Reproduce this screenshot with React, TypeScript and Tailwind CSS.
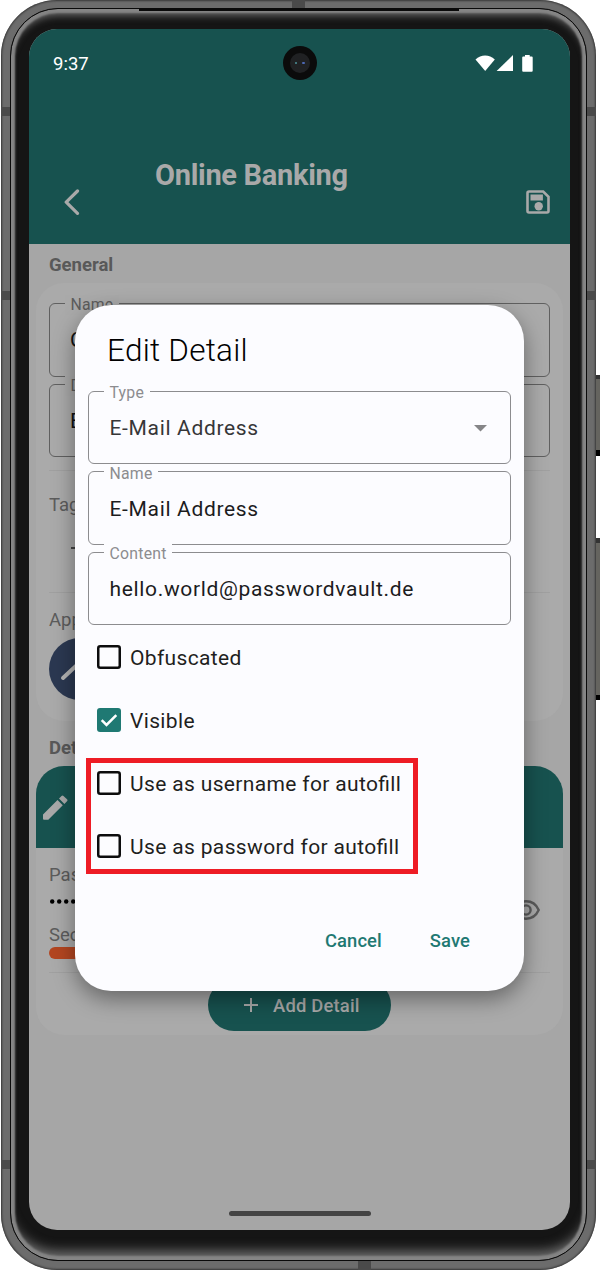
import React from "react";

type FieldProps = {
  label: string;
  value: string;
  dimmed?: boolean;
  select?: boolean;
  soft?: boolean;
};

function Field({ label, value, dimmed, select, soft }: FieldProps) {
  return (
    <div
      className={
        dimmed
          ? "relative flex h-[73.500px] items-center rounded-[6px] border-[1.4px] border-[#606060] pl-[20px]"
          : "relative flex h-[73.500px] items-center rounded-[6px] border-[1.4px] border-[#8c8c8f] pl-[20.500px]"
      }
    >
      <span
        className={
          dimmed
            ? "absolute -top-[9px] left-[15px] bg-[#a9a9a9] px-[5.500px] text-[15.800px] leading-[20px] tracking-[0.2px] text-[#5c5c5c]"
            : "absolute -top-[8.500px] left-[15px] bg-[#fcfcff] px-[5.500px] text-[15.800px] leading-[20px] tracking-[0.25px] text-[#8c8c8f]"
        }
      >
        {label}
      </span>
      <span
        className={
          dimmed
            ? "mt-[2px] text-[21px] text-[#111113]"
            : soft
              ? "mt-[3px] text-[21px] tracking-[0.66px] text-[#363638]"
              : "mt-[3px] text-[21px] tracking-[0.66px] text-[#1c1c1e]"
        }
      >
        {value}
      </span>
      {select && (
        <svg className="mt-[2px] mr-[23.500px] ml-auto h-[7px] w-[13px]" viewBox="0 0 13 7">
          <path d="M0 0h13L6.5 6.5z" fill="#858588" />
        </svg>
      )}
    </div>
  );
}

function Check({ label, checked }: { label: string; checked?: boolean }) {
  return (
    <label className="flex h-[63px] items-center gap-[9px] pl-[9px]">
      {checked ? (
        <span className="flex size-[24px] items-center justify-center rounded-[3px] bg-[#1f7973]">
          <svg className="size-[24px]" viewBox="0 0 24 24" fill="none" stroke="#fff" strokeWidth="2.5">
            <path d="M4.7 12.2l4.8 4.8L19.3 7.2" />
          </svg>
        </span>
      ) : (
        <span className="flex size-[24px]">
          <svg className="size-[24px]" viewBox="0 0 24 24" fill="none" stroke="#0c0c0d" strokeWidth="2.500">
            <rect x="1.250" y="1.250" width="21.500" height="21.500" rx="2" />
          </svg>
        </span>
      )}
      <span className="mt-[3px] text-[21px] tracking-[0.35px] text-[#1f1f21] [font-feature-settings:'liga'_1]">{label}</span>
    </label>
  );
}

function StatusBar() {
  return (
    <div className="flex h-[70px] items-center justify-between pr-[36px] pl-[24px]">
      <span className="mt-[2px] text-[18.5px] text-white">9:37</span>
      <svg className="h-[18px] w-[59px]" viewBox="0 0 59 18" fill="#fff">
        <path d="M.5 4.4C6-.8 14.300-.8 19.800 4.400L10.200 16z" />
        <path d="M38 0v16H21.600z" />
        <path d="M47.200 2.500q0-1 1-1h1.800V0h4.700v1.500h2q1 0 1 1v13.200q0 1-1 1h-8.500q-1 0-1-1z" />
      </svg>
    </div>
  );
}

function Header() {
  return (
    <header className="h-[215px] shrink-0 bg-[#17524f]">
      <StatusBar />
      <div className="flex h-[145px] pt-[58px] text-[#a9a9a9]">
        <svg className="mt-[31px] ml-[34px] h-[27px] w-[17px]" viewBox="0 0 17 27" fill="none" stroke="currentColor" strokeWidth="3.200" strokeLinecap="round" strokeLinejoin="round">
          <path d="M14.500 3L3.200 14.200 14.500 25.300" />
        </svg>
        <h1 className="ml-[75px] text-[29px] leading-[36px] font-bold tracking-[-0.3px]">Online Banking</h1>
        <svg className="mt-[32px] mr-[19px] ml-auto size-[26px]" viewBox="0 0 26 26">
          <path d="M4 2.500h14.200L23.500 7.800V22q0 1.500-1.500 1.500H4q-1.500 0-1.500-1.500V4q0-1.500 1.500-1.500z" fill="none" stroke="currentColor" strokeWidth="2.600" />
          <path d="M5.500 5.500h12.400v6H5.500z" fill="currentColor" />
          <circle cx="13.700" cy="17.200" r="4.200" fill="currentColor" />
        </svg>
      </div>
    </header>
  );
}

function VaultPage() {
  return (
    <main className="flex flex-1 flex-col px-[7px]">
      <h2 className="h-[39px] pl-[13px] text-[18.500px] leading-[42px] font-bold text-[#595959]">General</h2>
      <section className="h-[438px] rounded-[28px] bg-[#aaaaaa] px-[13px] pt-[20px]">
        <div className="flex flex-col gap-[7px]">
          <Field label="Name" value="O" dimmed />
          <Field label="D" value="B" dimmed />
        </div>
        <div className="mt-[12.500px] h-[1px] bg-[#a0a0a0]" />
        <p className="mt-[21px] text-[18.500px] leading-[26px] text-[#5c5c5c]">Tag</p>
        <div className="mt-[19px] mb-[1px] ml-[22px] flex h-[22px] items-center">
          <svg className="size-[16px]" viewBox="0 0 16 16" stroke="#444" strokeWidth="2">
            <path d="M0 8h16M8 0v16" />
          </svg>
        </div>
        <div className="mt-[33px] h-[1px] bg-[#a0a0a0]" />
        <p className="mt-[14px] text-[18.500px] leading-[26px] text-[#5c5c5c]">App</p>
        <div className="mt-[5px] flex size-[62px] items-center rounded-full bg-[#2b3851]">
          <svg className="ml-[9px] size-[40px]" viewBox="0 0 40 40" fill="none" stroke="#b3b3b3" strokeWidth="4" strokeLinecap="round">
            <path d="M5 29L20 15l16 16" />
          </svg>
        </div>
      </section>
      <h2 className="h-[45px] pl-[13px] text-[18.500px] leading-[55px] font-bold text-[#595959]">Det</h2>
      <section className="h-[269px] rounded-[28px] bg-[#aaaaaa]">
        <div className="flex h-[82px] items-center rounded-t-[28px] bg-[#17524f] pl-[7px]">
          <svg className="size-[25px]" viewBox="0 0 25 25" fill="#a9a9a9">
            <path d="M0 19.500L14.500 5l5.300 5.300L5.300 24.800H1Q0 24.800 0 23.800zM16 3.500l2.500-2.600q1-1 2 0l3.500 3.400q1 1 0 2l-2.600 2.600z" />
          </svg>
        </div>
        <div className="px-[13px] pt-[14px]">
          <p className="text-[18.500px] leading-[26px] text-[#5c5c5c]">Pas</p>
          <div className="flex h-[27px] items-center justify-between">
            <svg className="mb-[1px] h-[5px] w-[56px]" viewBox="0 0 56 5">
              {Array.from({ length: 8 }, (_, i) => (
                <circle key={i} cx={3.2 + i * 7} cy="2.500" r="2.200" />
              ))}
            </svg>
            <svg className="mt-[16px] mr-[10px] h-[20px] w-[28px]" viewBox="0 0 28 20" fill="none" stroke="#5b5b5b" strokeWidth="2.400">
              <path d="M1.300 10C6.500-1.600 21.500-1.600 26.700 10 21.500 21.600 6.500 21.600 1.300 10z" />
              <circle cx="14" cy="10" r="4.600" />
            </svg>
          </div>
          <p className="mt-[7px] text-[18.500px] leading-[26px] text-[#5c5c5c]">Sec</p>
          <div className="mt-[-1px] h-[12px] w-[200px] rounded-full bg-[#b34621]" />
          <div className="mt-[13px] h-[1px] bg-[#a0a0a0]" />
        </div>
        <div className="mx-auto mt-[6px] flex h-[52px] w-[183px] items-center gap-[15px] rounded-full bg-[#17524f] pl-[36px] text-[#a9a9a9]">
          <svg className="size-[14px]" viewBox="0 0 14 14" stroke="currentColor" strokeWidth="2">
            <path d="M0 7h14M7 0v14" />
          </svg>
          <span className="mt-[1px] text-[18.400px] font-medium tracking-[0.200px]">Add Detail</span>
        </div>
      </section>
    </main>
  );
}

function EditDialog() {
  return (
    <div className="absolute top-[275.500px] left-[46px] h-[686px] w-[449px] rounded-[36px] bg-[#fcfcff] px-[13px] pt-[28px] shadow-[0_8px_22px_rgba(0,0,0,0.4)]">
      <h2 className="pl-[19px] text-[31.500px] leading-[36px] font-light tracking-[0.250px] text-black">Edit Detail</h2>
      <div className="mt-[22px] flex flex-col gap-[7px]">
        <Field label="Type" value="E-Mail Address" select soft />
        <Field label="Name" value="E-Mail Address" />
        <Field label="Content" value="hello.world@passwordvault.de" />
      </div>
      <div className="pt-[0.500px]">
        <Check label="Obfuscated" />
        <Check label="Visible" checked />
        <Check label="Use as username for autofill" />
        <Check label="Use as password for autofill" />
      </div>
      <div className="mt-[48px] flex justify-end gap-[48px] pr-[41px] text-[18.400px] leading-[30px] font-medium tracking-[0.100px] text-[#1f7973]">
        <button>Cancel</button>
        <button>Save</button>
      </div>
      <div className="absolute top-[453.500px] left-[11px] h-[116px] w-[332px] border-[5px] border-[#ee1c25]" />
    </div>
  );
}

function SideKey({ tall }: { tall?: boolean }) {
  return (
    <div
      className={
        tall
          ? "h-[162px] w-[4px] border-t-[5px] border-b-[5px] border-t-[#333] border-b-black bg-[#65645f]"
          : "h-[81px] w-[4px] border-t-[4px] border-b-[6px] border-t-[#333] border-b-black bg-[#65645f]"
      }
    />
  );
}

function Seam({ className }: { className: string }) {
  return <div className={"absolute bg-[#4a4a4a] " + className} />;
}

export default function App() {
  return (
    <div className="flex h-[1271px] w-[600px] overflow-hidden bg-white pl-[1px] font-['Roboto','Noto_Sans',sans-serif]">
      <div className="relative h-[1270px] w-[595px] rounded-[56px] bg-[#6c6c6c] px-[9px] pt-[8px] pb-[9px] shadow-[inset_0_0_2px_1px_#383838]">
        <Seam className="top-[107px] left-0 h-[9px] w-[9px]" />
        <Seam className="top-[107px] right-0 h-[9px] w-[9px]" />
        <Seam className="top-[291px] left-0 h-[9px] w-[9px]" />
        <Seam className="top-[291px] right-0 h-[9px] w-[9px]" />
        <Seam className="top-[1160px] left-0 h-[9px] w-[9px]" />
        <Seam className="top-[1160px] right-0 h-[9px] w-[9px]" />
        <Seam className="top-0 left-[291px] h-[8px] w-[13px]" />
        <Seam className="bottom-0 left-[357px] h-[9px] w-[13px]" />
        <div className="relative h-full rounded-[48px] border border-[#0a0a0a] bg-[#151515] pt-[20px] pr-[16px] pb-[30px] pl-[18px] shadow-[inset_0_0_2px_4px_#858585,inset_0_8px_7px_-1px_#606060,inset_0_-15px_12px_-6px_#707070]">
          <div className="absolute top-0 left-[128px] h-[2px] w-[320px] bg-[#0a0a0a]" />
          <div className="relative flex h-[1200.500px] w-[541px] flex-col overflow-hidden rounded-[28px] bg-[#a6a6a6]">
            <Header />
            <VaultPage />
            <div className="mx-auto mb-[14px] h-[5px] w-[142px] rounded-full bg-[#444]" />
            <div className="absolute top-[17px] left-[253.500px] flex size-[34px] items-center justify-center rounded-full bg-[#0b0b0b]">
              <div className="flex size-[20px] items-center justify-center gap-[5px] rounded-full bg-[#202123]">
                <i className="size-[2.500px] rounded-full bg-[#4c929a]" />
                <i className="size-[2.500px] rounded-full bg-[#4c68b5]" />
              </div>
            </div>
            <EditDialog />
          </div>
        </div>
      </div>
      <div className="flex flex-col gap-[82px] pt-[375px]">
        <SideKey />
        <SideKey tall />
      </div>
    </div>
  );
}
